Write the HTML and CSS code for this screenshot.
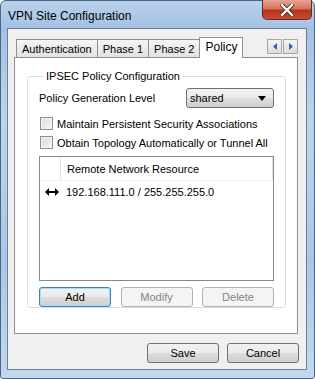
FILE: index.html
```html
<html>
  <head>
    <title>VPN Site Configuration</title>
    <link rel="stylesheet" href="styles.css">
  </head>
  <body>
    <div class="window">
      <div class="titlebar">
        <span class="title">VPN Site Configuration</span>
        <div class="close">
          <svg width="14" height="12" viewBox="0 0 14 12">
            <path d="M2 1 L12 11 M12 1 L2 11" stroke="#4a2020" stroke-width="4" stroke-linecap="square"/>
            <path d="M2 1 L12 11 M12 1 L2 11" stroke="#fff" stroke-width="2.4" stroke-linecap="square"/>
          </svg>
        </div>
      </div>

      <div class="client">
        <div class="tabs">
          <div class="tab">Authentication</div>
          <div class="tab">Phase 1</div>
          <div class="tab">Phase 2</div>
          <div class="tab active">Policy</div>
          <div class="scroller">
            <div class="sbtn"><svg width="6" height="7" viewBox="0 0 6 7"><path d="M5 0 L1 3.5 L5 7 Z" fill="#3b5fa6"/></svg></div>
            <div class="sbtn"><svg width="6" height="7" viewBox="0 0 6 7"><path d="M1 0 L5 3.5 L1 7 Z" fill="#3b5fa6"/></svg></div>
          </div>
        </div>

        <div class="panel">
          <fieldset class="group">
            <legend>IPSEC Policy Configuration</legend>

            <div class="row-level">
              <span>Policy Generation Level</span>
              <div class="combo">
                <span>shared</span>
                <svg width="8" height="5" viewBox="0 0 8 5"><path d="M0 0 L8 0 L4 5 Z" fill="#000"/></svg>
              </div>
            </div>

            <label class="check"><span class="box"></span>Maintain Persistent Security Associations</label>
            <label class="check"><span class="box"></span>Obtain Topology Automatically or Tunnel All</label>

            <div class="listbox">
              <div class="lhead">
                <div class="hcol-icon"></div>
                <div class="hcol">Remote Network Resource</div>
              </div>
              <div class="lrow">
                <svg class="arrow" width="14" height="8" viewBox="0 0 14 8">
                  <path d="M0 4 L4 0 L4 3 L10 3 L10 0 L14 4 L10 8 L10 5 L4 5 L4 8 Z" fill="#000"/>
                </svg>
                <span>192.168.111.0 / 255.255.255.0</span>
              </div>
            </div>

            <div class="listbtns">
              <button class="btn default">Add</button>
              <button class="btn" disabled>Modify</button>
              <button class="btn" disabled>Delete</button>
            </div>
          </fieldset>
        </div>

        <div class="footer">
          <button class="btn">Save</button>
          <button class="btn">Cancel</button>
        </div>
      </div>
    </div>
  </body>
</html>
```

FILE: styles.css
```css
body { margin: 0; width: 315px; height: 379px; overflow: hidden; font-family: "Liberation Sans", Arial, sans-serif; font-size: 11px; color: #000; background: #fff; white-space: nowrap; }

.window {
  box-sizing: border-box;
  width: 315px;
  height: 379px;
  border: 1px solid #4f6580;
  border-radius: 6px 6px 3px 3px;
  background: linear-gradient(to bottom, #b9d1ea 0px, #a4c1e4 28px, #bcd4ee 120px, #aac6e7 260px, #c2d8f0 379px);
  padding: 0 7px 8px 6px;
  display: flex;
  flex-direction: column;
}

.titlebar {
  height: 27px;
  display: flex;
  align-items: flex-start;
}
.title {
  font-size: 12px;
  margin-top: 8px;
  margin-left: 1px;
  color: #000;
}
.close {
  margin-left: auto;
  margin-right: -5px;
  margin-top: -1px;
  width: 50px;
  height: 20px;
  box-sizing: border-box;
  border: 1px solid #6b2a21;
  border-top: none;
  border-radius: 0 0 5px 5px;
  background: linear-gradient(to bottom, #e8a493 0%, #d4735e 45%, #b7321c 55%, #c74a2e 100%);
  display: flex;
  justify-content: center;
  align-items: center;
}

.client {
  flex: 1;
  background: #f0f0f0;
  border: 1px solid #6d7f97;
  padding: 8px 8px 0 6px;
  display: flex;
  flex-direction: column;
}

.tabs {
  display: flex;
  align-items: flex-end;
  height: 20px;
  position: relative;
  z-index: 2;
}
.tab {
  box-sizing: border-box;
  height: 18px;
  padding: 0 5px;
  border: 1px solid #8e8f8f;
  border-bottom: none;
  margin-right: -1px;
  background: linear-gradient(to bottom, #f5f5f5, #e2e2e2);
  display: flex;
  align-items: center;
  color: #000;
}
.tab:first-child { margin-left: 2px; }
.tab.active {
  height: 21px;
  background: #fff;
  padding: 0 5px 2px;
  margin-bottom: -1px;
  margin-left: 0;
  font-size: 12px;
}
.scroller {
  margin-left: auto;
  margin-bottom: 3px;
  display: flex;
}
.sbtn {
  box-sizing: border-box;
  width: 15px;
  height: 15px;
  border: 1px solid #a7a7a7;
  margin-left: 1px;
  background: linear-gradient(to bottom, #f4f4f4, #dcdcdc);
  display: flex;
  justify-content: center;
  align-items: center;
}

.panel {
  box-sizing: border-box;
  height: 277px;
  background: #fff;
  border: 1px solid #8e8f8f;
  padding: 12px 11px 0 12px;
}

.group {
  margin: 0;
  height: 238px;
  box-sizing: border-box;
  border: 1px solid #d5dfe5;
  border-radius: 3px;
  padding: 0 11px 0 11px;
}
.group legend {
  padding: 0 2px;
  margin-left: 5px;
}

.row-level {
  display: flex;
  align-items: center;
  justify-content: space-between;
  margin-top: 6px;
}
.combo {
  box-sizing: border-box;
  width: 88px;
  height: 20px;
  border: 1px solid #707070;
  border-radius: 3px;
  background: linear-gradient(to bottom, #f2f2f2 0%, #ebebeb 50%, #dddddd 51%, #cfcfcf 100%);
  display: flex;
  align-items: center;
  justify-content: space-between;
  padding: 0 7px 0 3px;
}

.check {
  display: flex;
  align-items: center;
  height: 19px;
}
.check:first-of-type { margin-top: 6px; }
.box {
  box-sizing: border-box;
  width: 13px;
  height: 13px;
  border: 1px solid #8e8f8f;
  background: linear-gradient(135deg, #dcdcdc, #f6f6f6);
  box-shadow: inset 0 0 0 1px #f4f4f4;
  margin: 0 4px 0 1px;
}

.listbox {
  box-sizing: border-box;
  height: 125px;
  margin-top: 4px;
  border: 1px solid #828790;
  background: #fff;
}
.lhead {
  display: flex;
  height: 23px;
  border-bottom: 1px solid #f0f0f0;
}
.hcol-icon {
  width: 20px;
  border-right: 1px solid #e5e5e5;
}
.hcol {
  flex: 1;
  border-right: 1px solid #e5e5e5;
  padding-left: 6px;
  display: flex;
  align-items: center;
}
.lrow {
  display: flex;
  align-items: center;
  height: 22px;
}
.arrow { margin: 0 7px 0 5px; }

.listbtns {
  display: flex;
  justify-content: space-between;
  margin-top: 6px;
}
.btn {
  box-sizing: border-box;
  width: 72px;
  height: 20px;
  border: 1px solid #707070;
  border-radius: 3px;
  background: linear-gradient(to bottom, #f2f2f2 0%, #ebebeb 50%, #dddddd 51%, #cfcfcf 100%);
  font-family: "Liberation Sans", Arial, sans-serif;
  font-size: 11px;
  color: #000;
  padding: 0;
}
.btn.default {
  border-color: #3c7fb1;
  box-shadow: inset 0 0 0 1px #9fe0f6;
}
.btn:disabled {
  border-color: #adb2b5;
  background: #f4f4f4;
  color: #838383;
}

.footer {
  display: flex;
  justify-content: flex-end;
  gap: 8px;
  margin-top: 9px;
  margin-right: -1px;
}
```
